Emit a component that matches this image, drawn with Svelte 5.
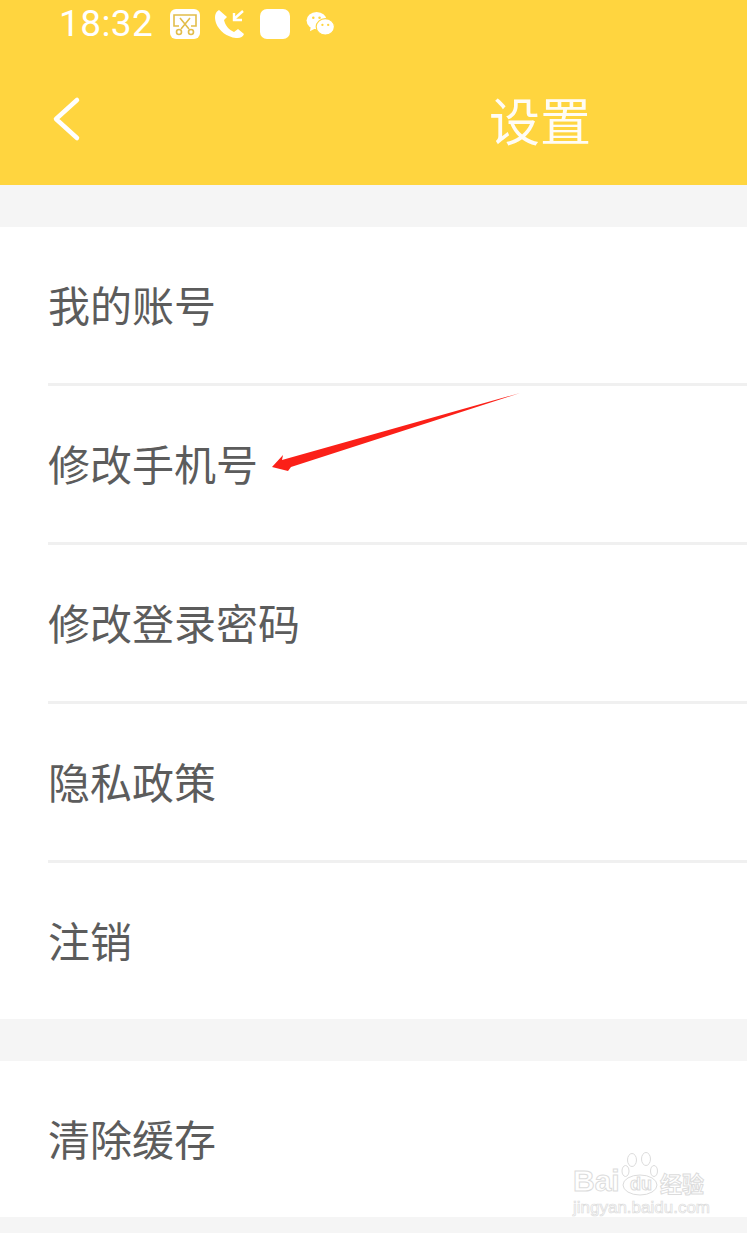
<script>
    const firstGroup = ["我的账号", "修改手机号", "修改登录密码", "隐私政策", "注销"];
</script>

<div class="page">
    <header class="top">
        <div class="status">
            <span class="time">18:32</span>
            <svg class="ic-scissor" viewBox="0 0 30 30">
                <rect width="30" height="30" rx="6" fill="#fff" />
                <path d="M9 17H4V6h22v11h-5" fill="none" stroke="#e2bd4a" stroke-width="1.600" />
                <path d="M10 9l9 11M20 9l-9 11" fill="none" stroke="#e2bd4a" stroke-width="1.600" />
                <circle cx="9" cy="23" r="2.500" fill="none" stroke="#e2bd4a" stroke-width="1.600" />
                <circle cx="21" cy="23" r="2.500" fill="none" stroke="#e2bd4a" stroke-width="1.600" />
            </svg>
            <svg class="ic-call" viewBox="0 0 32 30">
                <path d="M5 1 C1 3 0 8 2 14 C5 22 13 28 22 29 C26 29.500 29 28 30 25 L24 20 L20 23 C15 21 11 16 10 11 L13 8 Z" fill="#fff" />
                <path d="M29 2 L20 10 M20 4 V11 H28" fill="none" stroke="#fff" stroke-width="2.400" />
            </svg>
            <div class="ic-square"></div>
            <svg class="ic-wechat" viewBox="0 0 30 26">
                <ellipse cx="11" cy="10" rx="10.500" ry="9" fill="#fff" />
                <path d="M5 16l-1 5 6-3z" fill="#fff" />
                <ellipse cx="20" cy="16.500" rx="9.500" ry="8.500" fill="#fff" stroke="#ffd53f" stroke-width="1.200" />
                <circle cx="7.500" cy="7" r="1.300" fill="#ffd53f" />
                <circle cx="14" cy="7" r="1.300" fill="#ffd53f" />
                <circle cx="17" cy="14.500" r="1.200" fill="#ffd53f" />
                <circle cx="23" cy="14.500" r="1.200" fill="#ffd53f" />
            </svg>
        </div>
        <div class="nav">
            <svg class="back" viewBox="0 0 30 46">
                <path d="M26 4 L5 23 L26 42" fill="none" stroke="#fff" stroke-width="4.500" stroke-linecap="round" stroke-linejoin="round" />
            </svg>
            <h1>设置</h1>
        </div>
    </header>

    <section class="group">
        {#each firstGroup as label}
            <div class="row">{label}</div>
        {/each}
    </section>

    <section class="group second">
        <div class="row">清除缓存</div>
    </section>

    <!-- annotation drawn over the screenshot -->
    <svg class="arrow" viewBox="0 0 260 90">
        <path d="M250 3 L12 70 L13 65 L2 77 L18 81 L21 77 Z" fill="#fb2018" />
    </svg>

    <div class="watermark">
        <div class="wm-main">
            <span class="wm-bai">Bai</span>
            <span class="wm-paw">
                <svg viewBox="0 0 38 44">
                    <ellipse cx="11" cy="8" rx="4.500" ry="6.500" />
                    <ellipse cx="25" cy="7" rx="4.500" ry="6.500" />
                    <ellipse cx="4.500" cy="19" rx="3.500" ry="5.500" />
                    <ellipse cx="33" cy="19" rx="3.500" ry="5.500" />
                    <ellipse cx="19" cy="33" rx="17" ry="10" />
                </svg>
                <b>du</b>
            </span>
            <span class="wm-cn">经验</span>
        </div>
        <div class="wm-url">jingyan.baidu.com</div>
    </div>
</div>

<style>
    :global(body) {
        margin: 0;
        background: #f5f5f5;
    }

    .page {
        position: relative;
        width: 747px;
        height: 1233px;
        overflow: hidden;
        background: #f5f5f5;
        font-family: "Noto Sans CJK SC", "Noto Sans", sans-serif;
    }

    .top {
        height: 185px;
        background: #ffd53f;
        color: #fff;
        box-sizing: border-box;
        padding-left: 60px;
    }

    .status {
        height: 48px;
        display: flex;
        align-items: center;
        box-sizing: border-box;
        padding-bottom: 1px;
    }
    .time {
        font-family: Roboto, "Liberation Sans", sans-serif;
        font-size: 37px;
        letter-spacing: 0.4px;
        width: 110px;
        margin-left: -1px;
        margin-right: 1px;
    }
    .ic-scissor {
        width: 30px;
        height: 30px;
    }
    .ic-call {
        width: 32px;
        height: 30px;
        margin-left: 14px;
    }
    .ic-square {
        width: 30px;
        height: 30px;
        margin-left: 14px;
        background: #fff;
        border-radius: 7px;
    }
    .ic-wechat {
        width: 29px;
        height: 25px;
        margin-left: 16px;
    }

    .nav {
        display: flex;
        align-items: center;
        height: 100px;
        margin-top: 21px;
    }
    .back {
        width: 30px;
        height: 46px;
        margin-left: -9px;
    }
    h1 {
        margin: 0 0 0 408px;
        font-size: 51px;
        font-weight: 400;
        line-height: 1;
        opacity: 0.95;
    }

    .group {
        margin-top: 42px;
        background: #fff;
    }
    .group.second {
        height: 156px;
    }

    .row {
        height: 152px;
        padding-bottom: 4px;
        margin-left: 48px;
        border-bottom: 3px solid #f0f0f0;
        display: flex;
        align-items: center;
        font-size: 42px;
        color: #5c5c5c;
    }
    .row:last-child {
        border-bottom: none;
    }

    .arrow {
        position: absolute;
        left: 270px;
        top: 390px;
        width: 260px;
        height: 90px;
    }

    .watermark {
        position: absolute;
        left: 573px;
        top: 1151px;
        width: 140px;
        color: transparent;
        -webkit-text-stroke: 1px #dcdcdc;
        font-family: "Liberation Sans", sans-serif;
    }
    .wm-main {
        display: flex;
        align-items: flex-end;
        height: 45px;
    }
    .wm-bai {
        width: 48px;
        font-size: 30px;
        line-height: 30px;
        font-weight: 700;
    }
    .wm-paw {
        position: relative;
        width: 38px;
        height: 44px;
    }
    .wm-paw svg {
        width: 100%;
        height: 100%;
        fill: #fff;
        stroke: #dcdcdc;
        stroke-width: 1;
    }
    .wm-paw b {
        position: absolute;
        left: 9px;
        bottom: 3px;
        font-size: 18px;
        line-height: 18px;
    }
    .wm-cn {
        font-family: "Noto Sans CJK SC", sans-serif;
        font-size: 22px;
        line-height: 28px;
        margin-left: 1px;
        font-weight: 700;
        white-space: nowrap;
    }
    .wm-url {
        font-size: 17px;
        line-height: 20px;
        margin-top: 2px;
        -webkit-text-stroke-width: 0.7px;
        white-space: nowrap;
    }
</style>
